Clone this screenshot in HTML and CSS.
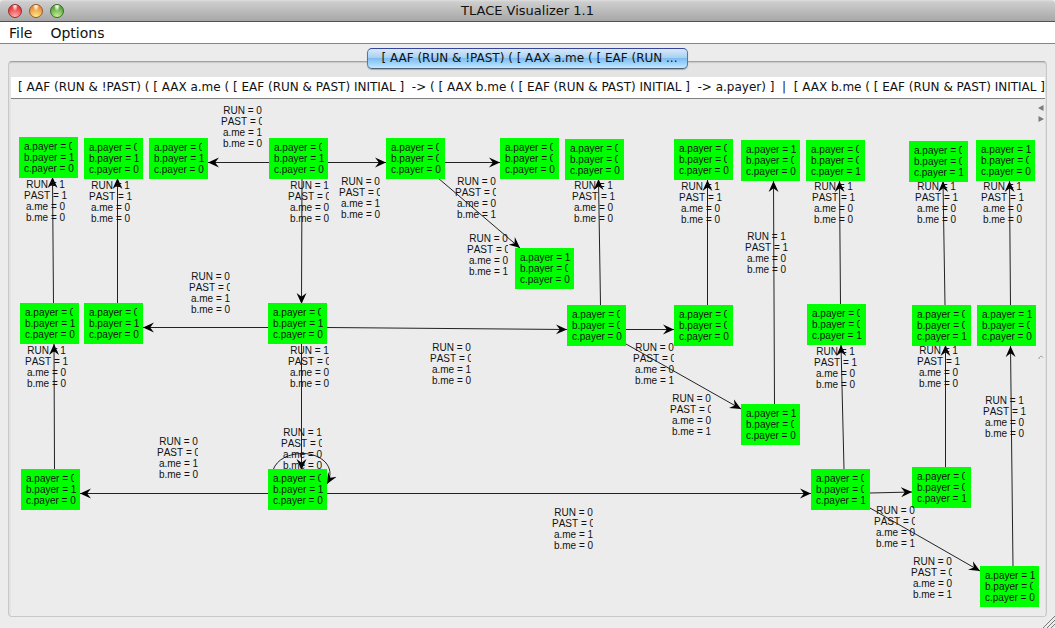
FILE: index.html
```
<!DOCTYPE html>
<html lang="en">
<head>
    <meta charset="UTF-8">
    <meta name="viewport" content="width=device-width, initial-scale=1.0">
    <title>TLACE Visualizer 1.1</title>
    <link rel="stylesheet" href="styles.css">
</head>
<body>
    <header class="titlebar">
        <div class="lights">
            <button class="light red" type="button" aria-label="Close"></button>
            <button class="light yellow" type="button" aria-label="Minimize"></button>
            <button class="light green" type="button" aria-label="Zoom"></button>
        </div>
        <h1>TLACE Visualizer 1.1</h1>
    </header>

    <nav class="menubar">
        <button type="button">File</button>
        <button type="button">Options</button>
    </nav>

    <main>
        <div class="tabs">
            <button class="tab" type="button">[ AAF (RUN &amp; !PAST) ( [ AAX a.me ( [ EAF (RUN ...</button>
        </div>
        <section class="panel">
            <div class="formula">[ AAF (RUN &amp; !PAST) ( [ AAX a.me ( [ EAF (RUN &amp; PAST) INITIAL ]  -&gt; ( [ AAX b.me ( [ EAF (RUN &amp; PAST) INITIAL ]  -&gt; a.payer) ]  |  [ AAX b.me ( [ EAF (RUN &amp; PAST) INITIAL ]</div>
            <div class="split">
                <div class="graph" id="graph">
                    <svg class="edges">
                        <defs>
                            <marker id="arrow" viewBox="0 0 10 10" refX="10" refY="5" markerWidth="11" markerHeight="11" markerUnits="userSpaceOnUse" orient="auto">
                                <path d="M0 0.5 L10 5 L0 9.5 L3.5 5 Z"/>
                            </marker>
                        </defs>
                        <g id="edges"></g>
                    </svg>
                </div>
                <div class="divider">
                    <button type="button" aria-label="Collapse left">
                        <svg width="6" height="8" viewBox="0 0 6 8"><path d="M5.5 1 V7 L0 4 Z"/></svg>
                    </button>
                    <button type="button" aria-label="Collapse right">
                        <svg width="6" height="8" viewBox="0 0 6 8"><path d="M0.5 1 V7 L6 4 Z"/></svg>
                    </button>
                    <svg class="knob" width="6" height="6" viewBox="0 0 6 6"><path d="M1 4 C1 1 4 0.5 5 2.5"/></svg>
                </div>
            </div>
        </section>
    </main>
    <svg class="grip" width="12" height="12" viewBox="0 0 12 12"><path d="M0 12 L12 0 M4 12 L12 4 M8 12 L12 8"/></svg>

    <script src="graph.js"></script>
</body>
</html>
```
FILE: styles.css
```
html{
    height: 100%;
}
body{
    margin: 0;
    min-height: 100%;
    display: flex;
    flex-direction: column;
    position: relative;
    overflow: hidden;
    background: #ececec;
    color: #111;
    font-family: "Lucida Grande", "DejaVu Sans", sans-serif;
    font-size: 12px;
}
button{
    margin: 0;
    padding: 0;
    border: none;
    background: none;
    color: inherit;
    font: inherit;
}

/* window title */
.titlebar{
    display: grid;
    grid-template-columns: 1fr auto 1fr;
    align-items: center;
    height: 21px;
    border-bottom: 1px solid #515151;
    border-radius: 4px 4px 0 0;
    background: linear-gradient(#dedede, #cdcdcd 2px, #a7a7a7);
}
.titlebar h1{
    margin: 0;
    font-size: 13px;
    font-weight: normal;
    line-height: 21px;
}
.lights{
    display: flex;
    gap: 7px;
    padding-left: 8px;
}
.light{
    width: 14px;
    height: 14px;
    border: 1px solid #66666a;
    border-radius: 50%;
}
.red{
    border-color: #8d3030;
    background: radial-gradient(ellipse at 50% 5%, #fff 0, #f9b0b0 18%, transparent 35%), radial-gradient(circle at 50% 100%, #ffb5b5, #e8383a 75%);
}
.yellow{
    border-color: #94592a;
    background: radial-gradient(ellipse at 50% 5%, #fff 0, #fbdcb0 18%, transparent 35%), radial-gradient(circle at 50% 100%, #fff08a, #e6903a 75%);
}
.green{
    border-color: #3c682c;
    background: radial-gradient(ellipse at 50% 5%, #fff 0, #cdeab8 18%, transparent 35%), radial-gradient(circle at 50% 100%, #cdf59a, #5aa340 75%);
}

.menubar{
    display: flex;
    gap: 18px;
    height: 21px;
    padding-left: 9px;
    background: #fff;
    border-bottom: 1px solid #868686;
    font-size: 14px;
}
.menubar button{
    line-height: 23px;
}

main{
    flex: 1;
    display: flex;
    flex-direction: column;
    padding: 4px 8px 11px;
}
.tabs{
    display: flex;
    justify-content: center;
    margin-bottom: -8px;
    z-index: 1;
}
.tab{
    height: 21px;
    padding: 0 9px 0 13px;
    border: 1px solid #3b5f9c;
    border-color: #36459c #4a78b4 #4f5f78;
    border-radius: 5px;
    background: linear-gradient(#d9e9f8, #a8d0f3 45%, #7fbcf0 50%, #a5d6fb 80%, #c3ebff);
    box-shadow: 0 1px 1px #aaa;
    line-height: 19px;
}

.panel{
    flex: 1;
    display: flex;
    flex-direction: column;
    min-width: 0;
    padding: 15px 1px 0 2px;
    border: 1px solid #c8c8c8;
    border-top-color: #a2a2a2;
    border-radius: 4px;
    background: #e4e4e4;
    box-shadow: inset 0 1px 1px #c8c8c8;
}
.formula{
    height: 21px;
    padding-left: 7px;
    overflow: hidden;
    white-space: pre;
    background: #fff;
    border-bottom: 1px solid #808080;
    line-height: 21px;
}
.split{
    flex: 1;
    display: flex;
    background: #ececec;
}
.divider{
    display: flex;
    flex-direction: column;
    align-items: center;
    gap: 3px;
    width: 8px;
    padding: 5px 0 27px;
}
.divider button{
    height: 8px;
    line-height: 0;
}
.divider path{
    fill: #7c7c7c;
}
.divider .knob{
    margin: auto 0;
}
.divider .knob path{
    fill: none;
    stroke: #999;
}

/* graph canvas */
.graph{
    flex: 1;
    position: relative;
    font-family: "Liberation Sans", Arial, sans-serif;
    font-size: 10px;
    line-height: 11px;
    font-kerning: none;
}
.edges{
    position: absolute;
    width: 100%;
    height: 100%;
    overflow: visible;
}
.edges path{
    fill: none;
    stroke: #222;
}
.edges marker path{
    fill: #000;
    stroke: none;
}
.node{
    position: absolute;
    box-sizing: border-box;
    width: 59px;
    height: 41px;
    padding: 4px 0 0 5px;
    background: #0f0;
}
.label{
    position: absolute;
    width: 43px;
    text-align: center;
}
.line{
    display: block;
    white-space: nowrap;
}
.cut{
    overflow: hidden;
    text-align: left;
}
.node .cut{
    width: 48px;
}
.label .cut{
    width: 41px;
}

.grip{
    position: absolute;
    right: 0;
    bottom: 0;
}
.grip path{
    stroke: #777;
}
```
FILE: graph.js
```
// top left corner of the canvas in graph coordinates
var ORIGIN_X = 11;
var ORIGIN_Y = 99;

// x, y, values of a.payer, b.payer, c.payer
var nodes = [
    [19, 137, "010"], [84, 138, "010"], [149, 138, "010"], [269, 138, "010"],
    [386, 138, "000"], [500, 138, "000"], [565, 139, "000"], [674, 139, "000"],
    [741, 140, "100"], [806, 140, "001"], [909, 141, "001"], [976, 140, "100"],
    [515, 248, "100"],
    [20, 303, "010"], [84, 303, "010"], [268, 303, "010"], [567, 305, "000"],
    [674, 305, "000"], [807, 304, "001"], [912, 305, "001"], [977, 305, "100"],
    [741, 404, "100"],
    [21, 469, "010"], [268, 469, "010"], [811, 469, "001"], [912, 467, "001"],
    [980, 566, "100"]
];

// x, y, values of RUN, PAST, a.me, b.me
var labels = [
    [221, 105, "0010"], [24, 179, "1100"], [89, 180, "1100"], [189, 271, "0010"],
    [288, 180, "1000"], [339, 176, "0010"], [455, 176, "0001"], [467, 233, "0001"],
    [572, 180, "1100"], [679, 181, "1100"], [745, 231, "1100"], [812, 181, "1100"],
    [915, 181, "1100"], [981, 181, "1100"],
    [25, 345, "1100"], [288, 345, "1000"], [430, 342, "0010"], [633, 342, "0001"],
    [670, 393, "0001"], [814, 346, "1100"], [917, 345, "1100"], [983, 395, "1100"],
    [157, 436, "0010"], [281, 427, "1000"], [552, 507, "0010"],
    [874, 505, "0001"], [911, 556, "0001"]
];

var edges = [
    "M269 162.5 H208", "M328 162.5 H386", "M444 162.5 H500", "M438 178 L520 248",
    "M302 178 L301.5 304", "M301.5 343 V470", "M268 327.5 H143", "M327 327.5 L567 329.5",
    "M626 329.5 H674", "M626 344 L741 409",
    "M53.5 304 L52.5 177", "M117.5 304 V178", "M54.5 469 L54 344",
    "M600.5 305 L598.5 179", "M707.5 305 V180", "M774.5 404 L773.5 181",
    "M840.5 305 L839.5 181", "M945 305 L943 181", "M1010.5 306 L1009.5 181",
    "M268 493.5 H80", "M327 493.5 H811", "M870 493 L912 492", "M870 508 L980 571",
    "M844 469 L841 345", "M945.5 467 V345", "M1013 567 L1010.5 346",
    "M273 470 C277 459 289 453.5 303 453.5 C320 453.5 337 466 327 484"
];

var graph = document.getElementById("graph");

function addBox(className, names, item){
    var box = document.createElement("div");
    box.className = className;
    box.style.left = (item[0] - ORIGIN_X) + "px";
    box.style.top = (item[1] - ORIGIN_Y) + "px";
    for(var i = 0; i < names.length; i++){
        var line = document.createElement("span");
        var value = item[2][i];
        line.className = "line";
        if( value == "0" && (names[i] == "a.payer" || names[i] == "b.payer" || names[i] == "PAST") )
            line.className += " cut";
        line.textContent = names[i] + " = " + value;
        box.appendChild(line);
    }
    graph.appendChild(box);
}

nodes.forEach(function(n){
    addBox("node", ["a.payer", "b.payer", "c.payer"], n);
});
labels.forEach(function(l){
    addBox("label", ["RUN", "PAST", "a.me", "b.me"], l);
});

var group = document.getElementById("edges");
group.setAttribute("transform", "translate(" + -ORIGIN_X + " " + -ORIGIN_Y + ")");
edges.forEach(function(d){
    var path = document.createElementNS("http://www.w3.org/2000/svg", "path");
    path.setAttribute("d", d);
    path.setAttribute("marker-end", "url(#arrow)");
    group.appendChild(path);
});
```
